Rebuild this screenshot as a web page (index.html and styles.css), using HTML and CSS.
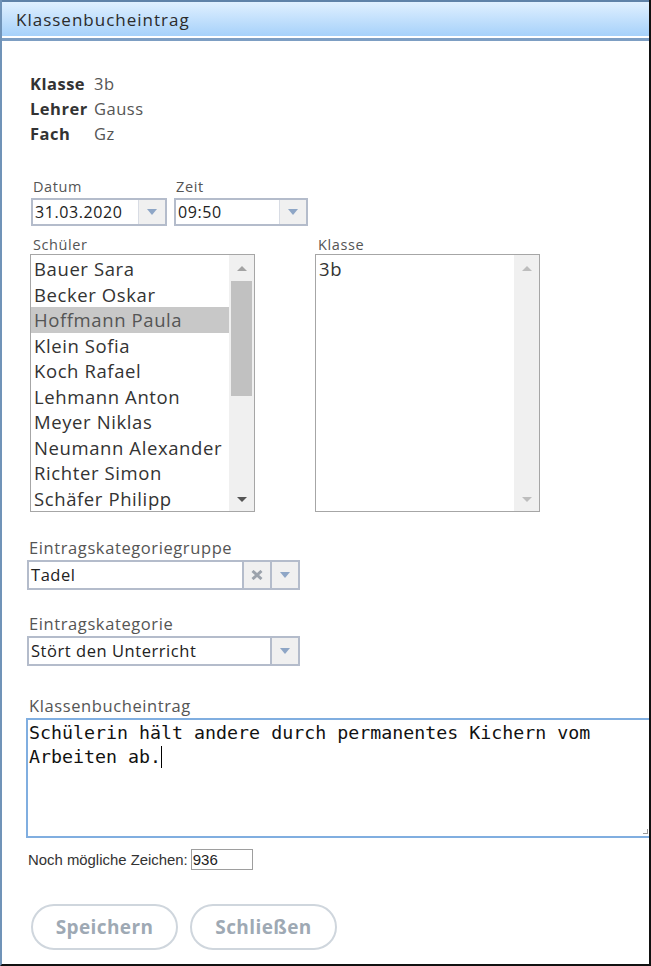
FILE: index.html
```html
<!DOCTYPE html>
<html lang="de">
<head>
<meta charset="utf-8">
<title>Klassenbucheintrag</title>
<link rel="stylesheet" href="styles.css">
</head>
<body>
<div class="window">
  <div class="titlebar">Klassenbucheintrag</div>
  <div class="titlebar-line"></div>
  <div class="content">
    <div class="info">
      <span class="info-label">Klasse</span><span class="info-value">3b</span>
      <span class="info-label">Lehrer</span><span class="info-value">Gauss</span>
      <span class="info-label">Fach</span><span class="info-value">Gz</span>
    </div>

    <div class="dt-row">
      <div class="field">
        <div class="small-label">Datum</div>
        <div class="picker picker-date">
          <span class="picker-value">31.03.2020</span>
          <span class="picker-btn"><span class="tri-down"></span></span>
        </div>
      </div>
      <div class="field">
        <div class="small-label">Zeit</div>
        <div class="picker picker-time">
          <span class="picker-value">09:50</span>
          <span class="picker-btn"><span class="tri-down"></span></span>
        </div>
      </div>
    </div>

    <div class="lists-row">
      <div class="field">
        <div class="small-label">Schüler</div>
        <div class="listbox">
          <div class="list-items">
            <div class="list-item">Bauer Sara</div>
            <div class="list-item">Becker Oskar</div>
            <div class="list-item selected">Hoffmann Paula</div>
            <div class="list-item">Klein Sofia</div>
            <div class="list-item">Koch Rafael</div>
            <div class="list-item">Lehmann Anton</div>
            <div class="list-item">Meyer Niklas</div>
            <div class="list-item">Neumann Alexander</div>
            <div class="list-item">Richter Simon</div>
            <div class="list-item">Schäfer Philipp</div>
          </div>
          <div class="scrollbar">
            <span class="sb-up"></span>
            <div class="sb-track"><div class="sb-thumb"></div></div>
            <span class="sb-down"></span>
          </div>
        </div>
      </div>
      <div class="field field-klasse">
        <div class="small-label">Klasse</div>
        <div class="listbox">
          <div class="list-items">
            <div class="list-item">3b</div>
          </div>
          <div class="scrollbar scrollbar-empty">
            <span class="sb-up light"></span>
            <div class="sb-track"></div>
            <span class="sb-down light"></span>
          </div>
        </div>
      </div>
    </div>

    <div class="combo-field first">
      <div class="med-label">Eintragskategoriegruppe</div>
      <div class="combo">
        <span class="combo-value">Tadel</span>
        <span class="combo-btn">
          <svg class="x-icon" width="12" height="10" viewBox="0 0 12 10"><path d="M1.5 1 L10.5 9 M10.5 1 L1.5 9" stroke="#9ba2ab" stroke-width="3" fill="none"/></svg>
        </span>
        <span class="combo-btn"><span class="tri-down"></span></span>
      </div>
    </div>

    <div class="combo-field">
      <div class="med-label">Eintragskategorie</div>
      <div class="combo">
        <span class="combo-value">Stört den Unterricht</span>
        <span class="combo-btn"><span class="tri-down"></span></span>
      </div>
    </div>

    <div class="text-field">
      <div class="med-label">Klassenbucheintrag</div>
      <div class="textarea">Schülerin hält andere durch permanentes Kichern vom<br>Arbeiten ab.<span class="caret"></span><span class="grip"></span></div>
    </div>

    <div class="counter">
      <span class="counter-label">Noch mögliche Zeichen:</span>
      <span class="counter-box">936</span>
    </div>

    <div class="buttons">
      <button class="btn">Speichern</button>
      <button class="btn">Schließen</button>
    </div>
  </div>
</div>
</body>
</html>
```

FILE: styles.css
```css
html, body {
  margin: 0;
  padding: 0;
  background: #fff;
}

body {
  font-family: "Open Sans", "Segoe UI", Lato, sans-serif;
  color: #333;
}

.window {
  width: 651px;
  height: 966px;
  box-sizing: border-box;
  border-left: 2px solid #7093b8;
  border-right: 2px solid #111;
  border-bottom: 2px solid #111;
  overflow: hidden;
  position: relative;
}

.titlebar {
  height: 38px;
  box-sizing: border-box;
  border-top: 2px solid #5f82a8;
  border-bottom: 2px solid #fff;
  background: linear-gradient(#e0f0ff, #a6d1fa);
  padding-left: 14px;
  display: flex;
  align-items: center;
  font-size: 17px;
  letter-spacing: 1px;
  color: #2b2b2b;
}

.titlebar-line {
  height: 3px;
  background: #7d9ec3;
}

.content {
  padding-left: 24px;
}

.info {
  margin-top: 30px;
  margin-left: 4px;
  display: grid;
  grid-template-columns: 64px auto;
  line-height: 25px;
  font-size: 16.5px;
}

.info-label {
  font-weight: bold;
  color: #333;
  letter-spacing: 0.5px;
}

.info-value {
  color: #555;
  letter-spacing: 0.5px;
}

.dt-row {
  display: flex;
  gap: 7px;
  margin-top: 32px;
  margin-left: 5px;
}

.field {
  display: flex;
  flex-direction: column;
}

.small-label {
  font-size: 14.5px;
  line-height: 17px;
  letter-spacing: 0.6px;
  color: #555;
  margin-left: 2px;
  margin-bottom: 3px;
}

.picker {
  height: 28px;
  box-sizing: border-box;
  border: 2px solid #b4bccb;
  display: flex;
  align-items: stretch;
  background: #fff;
}

.picker-date { width: 136px; }
.picker-time { width: 134px; }

.picker-value {
  flex: 1;
  font-size: 16px;
  line-height: 24px;
  letter-spacing: 0.6px;
  color: #222;
  padding-left: 2px;
}

.picker-btn {
  width: 26px;
  background: #f0f0f0;
  border-left: 1px solid #d8dce4;
  display: flex;
  align-items: center;
  justify-content: center;
}

.tri-down {
  width: 0;
  height: 0;
  border-left: 5px solid transparent;
  border-right: 5px solid transparent;
  border-top: 6px solid #8ea6c6;
}

.lists-row {
  display: flex;
  gap: 60px;
  margin-top: 10px;
  margin-left: 4px;
}

.lists-row .small-label {
  margin-left: 3px;
  margin-bottom: 1px;
}

.listbox {
  width: 225px;
  height: 258px;
  box-sizing: border-box;
  border: 1px solid #a6a6a6;
  display: flex;
  background: #fff;
}

.list-items {
  flex: 1;
  padding-top: 1px;
}

.list-item {
  height: 25.5px;
  line-height: 25.5px;
  font-size: 18.5px;
  letter-spacing: 0.6px;
  color: #333;
  padding-left: 3px;
  white-space: nowrap;
}

.list-item.selected {
  background: #c8c8c8;
  color: #555;
}

.scrollbar {
  width: 25px;
  background: #f0f0f0;
  display: flex;
  flex-direction: column;
  align-items: center;
}

.sb-up, .sb-down {
  width: 0;
  height: 0;
  border-left: 5px solid transparent;
  border-right: 5px solid transparent;
}

.sb-up {
  border-bottom: 5px solid #a3a3a3;
  margin-top: 11px;
  margin-bottom: 10px;
}

.sb-down {
  border-top: 5px solid #555;
  margin-top: 6px;
  margin-bottom: 9px;
}

.sb-up.light { border-bottom-color: #bdbdbd; }
.sb-down.light { border-top-color: #bdbdbd; }

.sb-track {
  flex: 1;
  width: 100%;
  display: flex;
  justify-content: center;
}

.sb-thumb {
  width: 21px;
  height: 115px;
  background: #c1c1c1;
}

.med-label {
  font-size: 16.5px;
  line-height: 20px;
  letter-spacing: 0.6px;
  color: #555;
  margin-left: 2px;
  margin-bottom: 2px;
}

.combo-field {
  margin-top: 24px;
  margin-left: 1px;
}

.combo-field.first {
  margin-top: 26px;
}

.combo {
  width: 273px;
  height: 30px;
  box-sizing: border-box;
  border: 2px solid #b4bccb;
  display: flex;
  align-items: stretch;
}

.combo-value {
  flex: 1;
  font-size: 16.5px;
  line-height: 26px;
  letter-spacing: 0.55px;
  color: #222;
  padding-left: 2px;
}

.combo-btn {
  width: 26px;
  background: #f0f0f0;
  border-left: 2px solid #b4bccb;
  display: flex;
  align-items: center;
  justify-content: center;
}

.text-field {
  margin-top: 30px;
}

.text-field .med-label {
  margin-left: 3px;
}

.textarea {
  width: 640px;
  height: 120px;
  box-sizing: border-box;
  border: 2px solid #80aee0;
  padding: 1px 0 0 1px;
  font-family: "DejaVu Sans Mono", "Liberation Mono", monospace;
  font-size: 18.3px;
  line-height: 24px;
  color: #111;
  position: relative;
}

.caret {
  display: inline-block;
  width: 1px;
  height: 22px;
  background: #000;
  vertical-align: -5px;
}

.grip {
  position: absolute;
  right: 16px;
  bottom: 2px;
  width: 4px;
  height: 4px;
  border-right: 1px solid #999;
  border-bottom: 1px solid #999;
}

.counter {
  display: flex;
  align-items: center;
  gap: 3px;
  margin-top: 11px;
  margin-left: 2px;
  font-family: "Liberation Sans", Arial, sans-serif;
  font-size: 14.9px;
  color: #333;
}

.counter-box {
  width: 62px;
  height: 21px;
  box-sizing: border-box;
  border: 1px solid #9e9e9e;
  font-size: 15px;
  line-height: 19px;
  padding-left: 1px;
  color: #222;
}

.buttons {
  display: flex;
  gap: 12px;
  margin-top: 34px;
  margin-left: 5px;
}

.btn {
  width: 147px;
  height: 46px;
  border: 2px solid #cfd6dd;
  border-radius: 23px;
  background: #fff;
  font-family: "Open Sans", Lato, sans-serif;
  font-weight: bold;
  font-size: 19px;
  letter-spacing: 0.4px;
  color: #9ea9b4;
  padding: 0;
}
```
